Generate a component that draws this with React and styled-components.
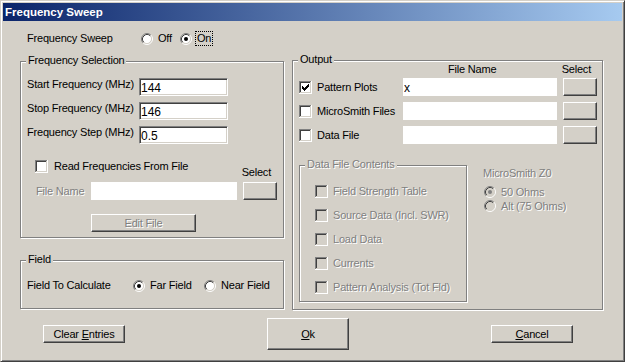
import React from 'react';
import styled, { createGlobalStyle, css } from 'styled-components';

const FACE = '#D4D0C8';
const SHADOW = '#808080';
const DARK = '#404040';
const HILITE = '#FFFFFF';

const GlobalStyle = createGlobalStyle`
  html, body {
    margin: 0;
    padding: 0;
    background: ${FACE};
  }
  body {
    font-family: "Liberation Sans", Arial, sans-serif;
    font-size: 11px;
    line-height: 13px;
    letter-spacing: -0.2px;
    color: #000;
  }
  * {
    box-sizing: border-box;
  }
`;

const disabledText = css`
  color: ${SHADOW};
  text-shadow: 1px 1px 0 ${HILITE};
`;

const Window = styled.div`
  width: 625px;
  height: 362px;
  background: ${FACE};
  border: 1px solid;
  border-color: ${FACE} ${DARK} ${DARK} ${FACE};
  box-shadow: inset 1px 1px ${HILITE}, inset -1px -1px ${SHADOW};
  padding: 2px;
  display: flex;
  flex-direction: column;
`;

const TitleBar = styled.div`
  height: 18px;
  flex: none;
  display: flex;
  align-items: center;
  padding-left: 2px;
  background: linear-gradient(to right, #0a246a, #a6caf0);
  color: #fff;
  font-weight: bold;
  font-size: 11.5px;
  letter-spacing: 0;
`;

const Body = styled.div`
  flex: 1;
  display: flex;
  flex-direction: column;
  padding: 10px 17px 0;
`;

const SweepRow = styled.div`
  display: flex;
  align-items: center;
  height: 15px;
  padding-left: 7px;
`;

const Columns = styled.div`
  display: flex;
  align-items: flex-start;
  gap: 8px;
  margin-top: 14px;
`;

const LeftColumn = styled.div`
  display: flex;
  flex-direction: column;
  gap: 22px;
  margin-top: 1px;
`;

const GroupBox = styled.div`
  position: relative;
  flex: none;
  width: ${p => p.$w}px;
  height: ${p => p.$h}px;
  padding: ${p => p.$pad || '0'};
  border: 1px solid ${SHADOW};
  box-shadow: inset 1px 1px ${HILITE}, 1px 1px ${HILITE};
`;

const Legend = styled.span`
  position: absolute;
  top: -8px;
  left: 5px;
  padding: 0 2px;
  background: ${FACE};
  white-space: nowrap;
  ${p => p.$disabled && disabledText}
`;

const Text = styled.span`
  flex: none;
  white-space: nowrap;
  width: ${p => (p.$w ? `${p.$w}px` : 'auto')};
  ${p => p.$disabled && disabledText}
`;

const FreqGrid = styled.div`
  display: grid;
  grid-template-columns: 112px 89px;
  grid-auto-rows: 18px;
  row-gap: 6px;
`;

const GridLabel = styled.span`
  white-space: nowrap;
  align-self: start;
`;

const SunkenInput = styled.input`
  width: 89px;
  height: 18px;
  margin: 0;
  padding: 2px 1px 0;
  font-family: "Liberation Sans", Arial, sans-serif;
  font-size: 12px;
  color: #000;
  background: #fff;
  border: 1px solid;
  border-color: ${SHADOW} ${HILITE} ${HILITE} ${SHADOW};
  box-shadow: inset 1px 1px ${DARK}, inset -1px -1px ${FACE};
  outline: none;
`;

const FlatField = styled.input`
  flex: none;
  width: ${p => p.$w}px;
  height: 18px;
  margin: 0;
  padding: 2px 1px 0;
  font-family: "Liberation Sans", Arial, sans-serif;
  font-size: 12px;
  color: #000;
  background: #fff;
  border: none;
  outline: none;
`;

const CheckRow = styled.div`
  display: flex;
  justify-content: space-between;
  height: 19px;
  margin-top: 16px;
`;

const TopItem = styled.div`
  align-self: flex-start;
  margin-left: 8px;
`;

const Caption = styled.span`
  align-self: flex-end;
  margin-right: ${p => p.$mr || 0}px;
  margin-left: ${p => p.$ml || 0}px;
  white-space: nowrap;
`;

const FileRow = styled.div`
  display: flex;
  align-items: center;
  height: 18px;
  margin-top: 3px;
  padding-left: 9px;
`;

const Button = styled.button`
  flex: none;
  width: ${p => p.$w}px;
  height: ${p => p.$h}px;
  margin: 0 0 0 ${p => p.$ml || 0}px;
  padding: 0;
  display: flex;
  align-items: center;
  justify-content: center;
  background: ${FACE};
  border: 1px solid;
  border-color: ${HILITE} ${DARK} ${DARK} ${HILITE};
  box-shadow: inset -1px -1px ${SHADOW};
  font-family: "Liberation Sans", Arial, sans-serif;
  font-size: 11px;
  letter-spacing: -0.2px;
  color: #000;
  ${p => p.$disabled && disabledText}
`;

const EditRow = styled.div`
  margin-top: 14px;
  padding-left: 64px;
`;

const FieldRow = styled.div`
  display: flex;
  align-items: center;
  height: 15px;
`;

const Option = styled.label`
  flex: none;
  display: inline-flex;
  align-items: center;
  gap: ${p => (p.$gap ?? 5)}px;
  width: ${p => (p.$w ? `${p.$w}px` : 'auto')};
  white-space: nowrap;
  ${p => p.$disabled && disabledText}

  svg {
    flex: none;
  }
`;

const Focus = styled.span`
  border: 1px dotted #000;
  padding: 0 1px;
  margin-left: -1px;
`;

const OutputHeader = styled.div`
  display: flex;
  justify-content: space-between;
  height: 13px;
  margin-top: 2px;
`;

const OutputRows = styled.div`
  display: flex;
  flex-direction: column;
  gap: 6px;
  margin-top: 2px;
`;

const OutputRow = styled.div`
  display: flex;
  align-items: center;
  height: 18px;
`;

const LowerSection = styled.div`
  display: flex;
  align-items: flex-start;
  margin-top: 21px;
`;

const CheckList = styled.div`
  display: flex;
  flex-direction: column;
  gap: 11px;
`;

const ZPanel = styled.div`
  display: flex;
  flex-direction: column;
  margin: 2px 0 0 16px;
`;

const ZList = styled.div`
  display: flex;
  flex-direction: column;
  margin: 5px 0 0 1px;

  & > label {
    height: 14px;
  }
`;

const ButtonRow = styled.div`
  display: flex;
  align-items: center;
  gap: 142px;
  height: 32px;
  margin-top: 8px;
  padding-left: 23px;
`;

const CHECK_ROWS = [
  [3, 9, 9],
  [4, 8, 9],
  [5, 3, 3],
  [5, 7, 9],
  [6, 3, 4],
  [6, 6, 8],
  [7, 3, 7],
  [8, 4, 6],
  [9, 5, 5],
];

function CheckBox({ checked, disabled }) {
  return (
    <svg width="13" height="13" viewBox="0 0 13 13" shapeRendering="crispEdges">
      <rect x="0" y="0" width="13" height="13" fill={HILITE} />
      <rect x="0" y="0" width="12" height="1" fill={SHADOW} />
      <rect x="0" y="0" width="1" height="12" fill={SHADOW} />
      <rect x="1" y="1" width="10" height="1" fill={DARK} />
      <rect x="1" y="1" width="1" height="10" fill={DARK} />
      <rect x="1" y="11" width="11" height="1" fill={FACE} />
      <rect x="11" y="1" width="1" height="11" fill={FACE} />
      <rect x="2" y="2" width="9" height="9" fill={disabled ? FACE : '#fff'} />
      {checked &&
        CHECK_ROWS.map(([y, x1, x2]) => (
          <rect key={`${y}-${x1}`} x={x1} y={y} width={x2 - x1 + 1} height="1" fill={disabled ? SHADOW : '#000'} />
        ))}
    </svg>
  );
}

function Radio({ checked, disabled }) {
  return (
    <svg width="12" height="12" viewBox="0 0 12 12">
      <circle cx="6" cy="6" r="4.5" fill={disabled ? FACE : '#fff'} />
      <path d="M2.11 9.89 A5.5 5.5 0 0 1 9.89 2.11" fill="none" stroke={SHADOW} />
      <path d="M9.89 2.11 A5.5 5.5 0 0 1 2.11 9.89" fill="none" stroke={HILITE} />
      <path d="M2.82 9.18 A4.5 4.5 0 0 1 9.18 2.82" fill="none" stroke={DARK} />
      <path d="M9.18 2.82 A4.5 4.5 0 0 1 2.82 9.18" fill="none" stroke={FACE} />
      {checked && <circle cx="6" cy="6" r="2" fill={disabled ? SHADOW : '#000'} />}
    </svg>
  );
}

const outputFiles = [
  { name: 'Pattern Plots', checked: true, value: 'x' },
  { name: 'MicroSmith Files', checked: false, value: '' },
  { name: 'Data File', checked: false, value: '' },
];

const dataContents = [
  'Field Strength Table',
  'Source Data (Incl. SWR)',
  'Load Data',
  'Currents',
  'Pattern Analysis (Tot Fld)',
];

const frequencies = [
  { label: 'Start Frequency (MHz)', value: '144' },
  { label: 'Stop Frequency (MHz)', value: '146' },
  { label: 'Frequency Step (MHz)', value: '0.5' },
];

function App() {
  return (
    <>
      <GlobalStyle />
      <Window>
        <TitleBar>Frequency Sweep</TitleBar>
        <Body>
          <SweepRow>
            <Text $w={114}>Frequency Sweep</Text>
            <Option $w={39}>
              <Radio />
              Off
            </Option>
            <Option $gap={4}>
              <Radio checked />
              <Focus>On</Focus>
            </Option>
          </SweepRow>

          <Columns>
            <LeftColumn>
              <GroupBox $w={264} $h={177} $pad="16px 6px 0">
                <Legend>Frequency Selection</Legend>
                <FreqGrid>
                  {frequencies.map(f => (
                    <React.Fragment key={f.label}>
                      <GridLabel>{f.label}</GridLabel>
                      <SunkenInput defaultValue={f.value} />
                    </React.Fragment>
                  ))}
                </FreqGrid>
                <CheckRow>
                  <TopItem>
                    <Option $gap={6}>
                      <CheckBox />
                      Read Frequencies From File
                    </Option>
                  </TopItem>
                  <Caption $mr={6}>Select</Caption>
                </CheckRow>
                <FileRow>
                  <Text $w={55} $disabled>File Name</Text>
                  <FlatField $w={146} disabled />
                  <Button $w={34} $h={18} $ml={6} />
                </FileRow>
                <EditRow>
                  <Button $w={105} $h={18} $disabled>Edit File</Button>
                </EditRow>
              </GroupBox>

              <GroupBox $w={264} $h={49} $pad="17px 6px 0">
                <Legend>Field</Legend>
                <FieldRow>
                  <Text $w={106}>Field To Calculate</Text>
                  <Option $w={71}>
                    <Radio checked />
                    Far Field
                  </Option>
                  <Option>
                    <Radio />
                    Near Field
                  </Option>
                </FieldRow>
              </GroupBox>
            </LeftColumn>

            <GroupBox $w={311} $h={250} $pad="0 5px 0 6px">
              <Legend>Output</Legend>
              <OutputHeader>
                <Caption $ml={149}>File Name</Caption>
                <Caption $mr={6}>Select</Caption>
              </OutputHeader>
              <OutputRows>
                {outputFiles.map(f => (
                  <OutputRow key={f.name}>
                    <Option $w={104}>
                      <CheckBox checked={f.checked} />
                      {f.name}
                    </Option>
                    <FlatField $w={154} defaultValue={f.value} />
                    <Button $w={34} $h={18} $ml={6} />
                  </OutputRow>
                ))}
              </OutputRows>
              <LowerSection>
                <GroupBox $w={168} $h={137} $pad="19px 0 0 15px">
                  <Legend $disabled>Data File Contents</Legend>
                  <CheckList>
                    {dataContents.map(item => (
                      <Option key={item} $disabled>
                        <CheckBox disabled />
                        {item}
                      </Option>
                    ))}
                  </CheckList>
                </GroupBox>
                <ZPanel>
                  <Text $disabled>MicroSmith Z0</Text>
                  <ZList>
                    <Option $disabled>
                      <Radio checked disabled />
                      50 Ohms
                    </Option>
                    <Option $disabled>
                      <Radio disabled />
                      Alt (75 Ohms)
                    </Option>
                  </ZList>
                </ZPanel>
              </LowerSection>
            </GroupBox>
          </Columns>

          <ButtonRow>
            <Button $w={82} $h={18}>
              <span>
                Clear <u>E</u>ntries
              </span>
            </Button>
            <Button $w={82} $h={32}>
              <span>
                <u>O</u>k
              </span>
            </Button>
            <Button $w={82} $h={18}>
              <span>
                <u>C</u>ancel
              </span>
            </Button>
          </ButtonRow>
        </Body>
      </Window>
    </>
  );
}

export default App;
